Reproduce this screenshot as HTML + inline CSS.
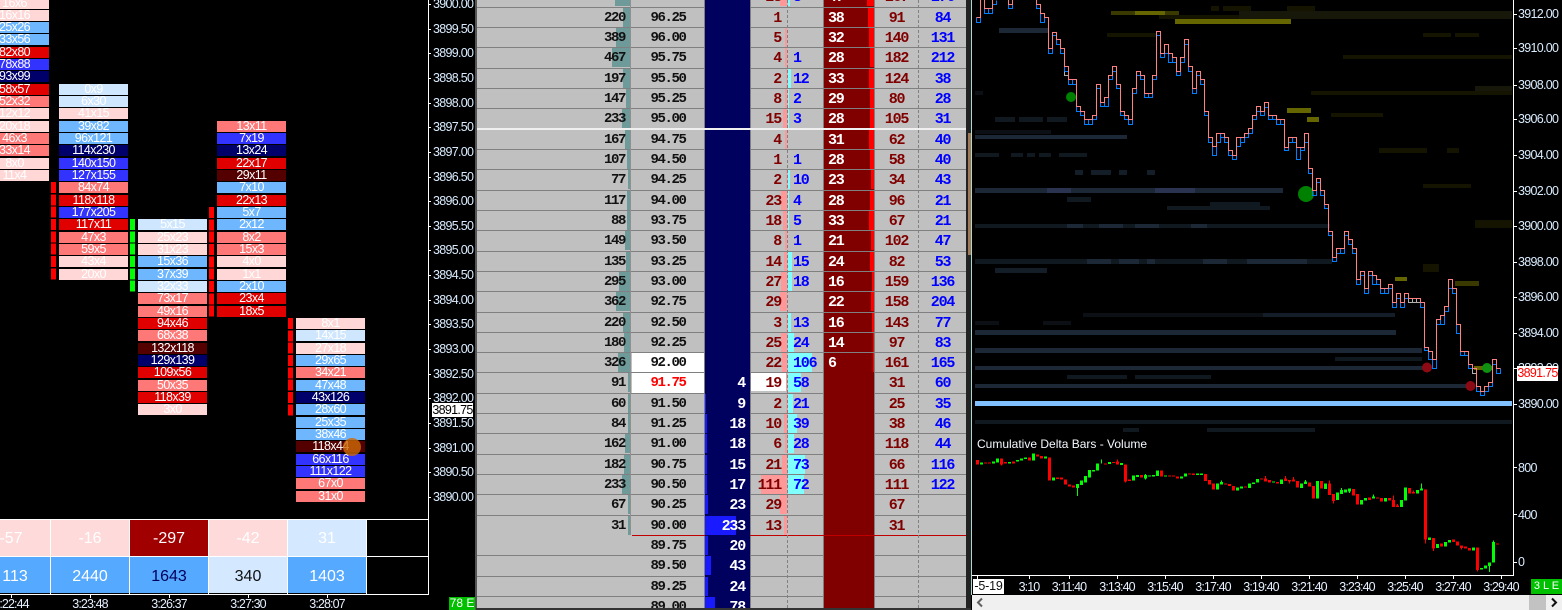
<!DOCTYPE html>
<html><head><meta charset="utf-8"><title>Chart</title>
<style>
html,body{margin:0;padding:0;background:#000;width:1562px;height:610px;overflow:hidden}
#w{position:relative;width:1562px;height:610px;overflow:hidden;background:#000;font-family:"Liberation Sans",sans-serif}
#w div{position:absolute}
.c{width:69px;height:11px;line-height:11px;font-size:12.5px;letter-spacing:-.6px;color:#fff;text-align:center;white-space:nowrap}
.lp{background:#ffd7d7}.lb{background:#cfe6ff}.b{background:#6eb7ff}.s{background:#ff7878}.r0{background:#e00000}.bb{background:#3333ff}.n{background:#00006a}.d0{background:#550000}
.mk{width:5px;background:repeating-linear-gradient(#ff0000 0 11px,#000 11px 12.325px)}
.t{left:0;width:78px;height:36px;line-height:37px;font-size:16px;text-align:center;color:#fff}
.t2{line-height:39px}
.a{left:433px;width:42px;height:14px;line-height:14px;font-size:12.5px;letter-spacing:-.7px;color:#d9ecff;white-space:nowrap}
.ak{left:429px;width:2px;height:1px;background:#fff}
.tm{width:60px;text-align:center;height:14px;line-height:14px;font-size:12.5px;letter-spacing:-.9px;color:#e6f0ff;white-space:nowrap}
.l{left:477px;width:489px;height:1px;background:#808080}
.r{left:477px;width:489px;height:20px;line-height:21px;font-family:"Liberation Mono",monospace;font-weight:bold;font-size:15px;letter-spacing:-1.2px}
.r i,.r u{position:absolute;font-style:normal;text-decoration:none;top:0;white-space:nowrap}
.r u{height:19px}
.tl{right:336px;background:#6f9a9a}
.v{right:341px;font-size:14px;letter-spacing:-1.4px;color:#111}
.p{left:155px;width:72px;text-align:center;font-size:14px;letter-spacing:-1.4px;color:#111}
.nt{right:221px;color:#fff}
.nb{left:228px;background:#1a1aff}
.k{right:179px;background:#ff9999}
.bd{right:185px;color:#800000}
.cy{left:311px;background:#80ffff}
.of{left:316px;color:#0000ff}
.x{left:351px;color:#fff}
.e{right:92px;background:#ff0000}
.y{left:398px;width:43px;text-align:center;color:#800000}
.z{left:442px;width:47px;text-align:center;color:#0000ff}
.ra{left:1518px;width:42px;height:14px;line-height:14px;font-size:12.5px;letter-spacing:-.7px;color:#d9ecff;white-space:nowrap}
.rk{left:1513px;width:4px;height:1px;background:#fff}
.tk{width:1px;height:4px;top:575px;background:#fff}
</style></head><body><div id="w">

<!-- footprint col 1 -->
<div class="c lp" style="left:-20px;top:-2px">16x6</div>
<div class="c lp" style="left:-20px;top:10px">16x16</div>
<div class="c b" style="left:-20px;top:22px">25x26</div>
<div class="c b" style="left:-20px;top:34px">33x56</div>
<div class="c r0" style="left:-20px;top:47px">82x80</div>
<div class="c bb" style="left:-20px;top:59px">78x88</div>
<div class="c n" style="left:-20px;top:71px">93x99</div>
<div class="c r0" style="left:-20px;top:84px">58x57</div>
<div class="c s" style="left:-20px;top:96px">52x32</div>
<div class="c lp" style="left:-20px;top:108px">12x12</div>
<div class="c lp" style="left:-20px;top:121px">20x18</div>
<div class="c s" style="left:-20px;top:133px">46x3</div>
<div class="c s" style="left:-20px;top:145px">33x14</div>
<div class="c lp" style="left:-20px;top:158px">8x0</div>
<div class="c lp" style="left:-20px;top:170px">11x4</div>
<!-- col 2 -->
<div class="c lb" style="left:59px;top:84px">0x9</div>
<div class="c lb" style="left:59px;top:96px">6x30</div>
<div class="c lp" style="left:59px;top:108px">41x15</div>
<div class="c b" style="left:59px;top:121px">39x82</div>
<div class="c b" style="left:59px;top:133px">96x121</div>
<div class="c n" style="left:59px;top:145px">114x230</div>
<div class="c bb" style="left:59px;top:158px">140x150</div>
<div class="c bb" style="left:59px;top:170px">127x155</div>
<div class="c s" style="left:59px;top:182px">84x74</div>
<div class="c r0" style="left:59px;top:195px">118x118</div>
<div class="c bb" style="left:59px;top:207px">177x205</div>
<div class="c r0" style="left:59px;top:219px">117x11</div>
<div class="c s" style="left:59px;top:232px">47x3</div>
<div class="c s" style="left:59px;top:244px">59x5</div>
<div class="c lp" style="left:59px;top:256px">43x4</div>
<div class="c lp" style="left:59px;top:269px">20x0</div>
<!-- col 3 -->
<div class="c lb" style="left:138px;top:219px">5x15</div>
<div class="c lp" style="left:138px;top:232px">25x23</div>
<div class="c lp" style="left:138px;top:244px">31x23</div>
<div class="c b" style="left:138px;top:256px">15x36</div>
<div class="c b" style="left:138px;top:269px">37x39</div>
<div class="c lb" style="left:138px;top:281px">32x33</div>
<div class="c s" style="left:138px;top:293px">73x17</div>
<div class="c s" style="left:138px;top:306px">49x16</div>
<div class="c r0" style="left:138px;top:318px">94x46</div>
<div class="c s" style="left:138px;top:330px">68x38</div>
<div class="c d0" style="left:138px;top:343px">132x118</div>
<div class="c n" style="left:138px;top:355px">129x139</div>
<div class="c r0" style="left:138px;top:367px">109x56</div>
<div class="c s" style="left:138px;top:380px">50x35</div>
<div class="c r0" style="left:138px;top:392px">118x39</div>
<div class="c lp" style="left:138px;top:404px">3x0</div>
<!-- col 4 -->
<div class="c s" style="left:217px;top:121px">13x11</div>
<div class="c bb" style="left:217px;top:133px">7x19</div>
<div class="c n" style="left:217px;top:145px">13x24</div>
<div class="c r0" style="left:217px;top:158px">22x17</div>
<div class="c d0" style="left:217px;top:170px">29x11</div>
<div class="c b" style="left:217px;top:182px">7x10</div>
<div class="c r0" style="left:217px;top:195px">22x13</div>
<div class="c b" style="left:217px;top:207px">5x7</div>
<div class="c b" style="left:217px;top:219px">2x12</div>
<div class="c s" style="left:217px;top:232px">8x2</div>
<div class="c s" style="left:217px;top:244px">15x3</div>
<div class="c lp" style="left:217px;top:256px">4x0</div>
<div class="c lp" style="left:217px;top:269px">1x1</div>
<div class="c b" style="left:217px;top:281px">2x10</div>
<div class="c r0" style="left:217px;top:293px">23x4</div>
<div class="c r0" style="left:217px;top:306px">18x5</div>
<!-- col 5 -->
<div class="c lp" style="left:296px;top:318px">8x1</div>
<div class="c lb" style="left:296px;top:330px">14x15</div>
<div class="c lp" style="left:296px;top:343px">27x18</div>
<div class="c b" style="left:296px;top:355px">29x65</div>
<div class="c s" style="left:296px;top:367px">34x21</div>
<div class="c b" style="left:296px;top:380px">47x48</div>
<div class="c n" style="left:296px;top:392px">43x126</div>
<div class="c b" style="left:296px;top:404px">28x60</div>
<div class="c b" style="left:296px;top:417px">25x35</div>
<div class="c b" style="left:296px;top:429px">38x46</div>
<div class="c d0" style="left:296px;top:441px">118x44</div>
<div class="c bb" style="left:296px;top:454px">66x116</div>
<div class="c bb" style="left:296px;top:466px">111x122</div>
<div class="c s" style="left:296px;top:478px">67x0</div>
<div class="c s" style="left:296px;top:491px">31x0</div>
<div style="left:343px;top:438px;width:18px;height:18px;border-radius:50%;background:rgba(205,105,5,.8)"></div>
<!-- markers -->
<div class="mk" style="left:51px;top:182px;height:98px"></div>
<div class="mk" style="left:130px;top:219px;height:73px;background:repeating-linear-gradient(#00ff00 0 11px,#000 11px 12.325px)"></div>
<div class="mk" style="left:209px;top:207px;height:110px"></div>
<div class="mk" style="left:288px;top:318px;height:98px"></div>

<!-- bottom table -->
<div class="t" style="left:-28px;top:520px;width:78px;background:#ffdada">-57</div>
<div class="t" style="left:51px;top:520px;background:#ffdada">-16</div>
<div class="t" style="left:130px;top:520px;background:#a00000">-297</div>
<div class="t" style="left:209px;top:520px;background:#ffdada">-42</div>
<div class="t" style="left:288px;top:520px;background:#d4e8ff">31</div>
<div class="t t2" style="left:-20px;top:557px;width:70px;background:#55a9ff">113</div>
<div class="t t2" style="left:51px;top:557px;background:#55a9ff">2440</div>
<div class="t t2" style="left:130px;top:557px;background:#55a9ff;color:#00005a">1643</div>
<div class="t t2" style="left:209px;top:557px;background:#d4e8ff;color:#111">340</div>
<div class="t t2" style="left:288px;top:557px;background:#55a9ff">1403</div>
<div style="left:0;top:519px;width:428px;height:1px;background:#fff"></div>
<div style="left:0;top:556px;width:428px;height:1px;background:#fff"></div>
<div style="left:0;top:594px;width:429px;height:1px;background:#fff"></div>
<div style="left:428px;top:0;width:1px;height:595px;background:#fff"></div>
<div style="left:50px;top:519px;width:1px;height:75px;background:#fff"></div>
<div style="left:129px;top:519px;width:1px;height:75px;background:#fff"></div>
<div style="left:208px;top:519px;width:1px;height:75px;background:#fff"></div>
<div style="left:287px;top:519px;width:1px;height:75px;background:#fff"></div>
<div style="left:366px;top:519px;width:1px;height:75px;background:#fff"></div>
<div class="tk" style="left:11px;top:595px;height:3px"></div><div class="tk" style="left:90px;top:595px;height:3px"></div><div class="tk" style="left:169px;top:595px;height:3px"></div><div class="tk" style="left:248px;top:595px;height:3px"></div><div class="tk" style="left:327px;top:595px;height:3px"></div>
<div class="tm" style="left:-19px;top:597px">3:22:44</div>
<div class="tm" style="left:60px;top:597px">3:23:48</div>
<div class="tm" style="left:139px;top:597px">3:26:37</div>
<div class="tm" style="left:218px;top:597px">3:27:30</div>
<div class="tm" style="left:297px;top:597px">3:28:07</div>

<!-- left axis -->
<div class="a" style="top:-3px">3900.00</div><div class="ak" style="top:4px"></div>
<div class="a" style="top:22px">3899.50</div><div class="ak" style="top:29px"></div>
<div class="a" style="top:46px">3899.00</div><div class="ak" style="top:53px"></div>
<div class="a" style="top:71px">3898.50</div><div class="ak" style="top:78px"></div>
<div class="a" style="top:96px">3898.00</div><div class="ak" style="top:103px"></div>
<div class="a" style="top:120px">3897.50</div><div class="ak" style="top:127px"></div>
<div class="a" style="top:145px">3897.00</div><div class="ak" style="top:152px"></div>
<div class="a" style="top:170px">3896.50</div><div class="ak" style="top:177px"></div>
<div class="a" style="top:194px">3896.00</div><div class="ak" style="top:201px"></div>
<div class="a" style="top:219px">3895.50</div><div class="ak" style="top:226px"></div>
<div class="a" style="top:243px">3895.00</div><div class="ak" style="top:250px"></div>
<div class="a" style="top:268px">3894.50</div><div class="ak" style="top:275px"></div>
<div class="a" style="top:293px">3894.00</div><div class="ak" style="top:300px"></div>
<div class="a" style="top:317px">3893.50</div><div class="ak" style="top:324px"></div>
<div class="a" style="top:342px">3893.00</div><div class="ak" style="top:349px"></div>
<div class="a" style="top:367px">3892.50</div><div class="ak" style="top:374px"></div>
<div class="a" style="top:391px">3892.00</div><div class="ak" style="top:398px"></div>
<div class="a" style="top:416px">3891.50</div><div class="ak" style="top:423px"></div>
<div class="a" style="top:441px">3891.00</div><div class="ak" style="top:448px"></div>
<div class="a" style="top:465px">3890.50</div><div class="ak" style="top:472px"></div>
<div class="a" style="top:490px">3890.00</div><div class="ak" style="top:497px"></div>
<div style="left:432px;top:403px;width:41px;height:14px;background:#fff;color:#000;font-size:12.5px;line-height:14px;letter-spacing:-.7px;text-align:center;white-space:nowrap">3891.75</div>
<div style="left:449px;top:597px;width:26px;height:13px;background:#00c000;color:#fff;font-size:12px;line-height:13px;text-align:center;white-space:nowrap">78 E</div>
<div style="left:475px;top:0;width:2px;height:610px;background:#555"></div>

<!-- DOM ladder -->
<div style="left:477px;top:0;width:489px;height:608px;background:#c0c0c0"></div>
<div class="l" style="top:7px"></div><div class="l" style="top:27px"></div><div class="l" style="top:47px"></div><div class="l" style="top:68px"></div><div class="l" style="top:88px"></div><div class="l" style="top:108px"></div><div class="l" style="top:149px"></div><div class="l" style="top:169px"></div><div class="l" style="top:190px"></div><div class="l" style="top:210px"></div><div class="l" style="top:230px"></div><div class="l" style="top:251px"></div><div class="l" style="top:271px"></div><div class="l" style="top:291px"></div><div class="l" style="top:312px"></div><div class="l" style="top:332px"></div><div class="l" style="top:352px"></div><div class="l" style="top:372px"></div><div class="l" style="top:393px"></div><div class="l" style="top:413px"></div><div class="l" style="top:433px"></div><div class="l" style="top:454px"></div><div class="l" style="top:474px"></div><div class="l" style="top:494px"></div><div class="l" style="top:515px"></div><div class="l" style="top:555px"></div><div class="l" style="top:576px"></div><div class="l" style="top:596px"></div>
<div style="left:632px;top:353px;width:72px;height:40px;background:#fff"></div>
<div style="left:632px;top:372px;width:72px;height:1px;background:#808080"></div>
<div style="left:704px;top:0;width:1px;height:608px;background:#808080"></div>
<div style="left:630px;top:0;width:1px;height:535px;background:#909090"></div>
<div style="left:705px;top:0;width:45px;height:608px;background:#00005f"></div>
<div style="left:750px;top:0;width:1px;height:608px;background:#808080"></div>
<div style="left:823px;top:0;width:1px;height:608px;background:#808080"></div>
<div style="left:824px;top:0;width:50px;height:608px;background:#800000"></div>
<div style="left:874px;top:0;width:1px;height:608px;background:#808080"></div>
<div style="left:824px;top:7px;width:50px;height:1px;background:#808080"></div><div style="left:824px;top:27px;width:50px;height:1px;background:#808080"></div><div style="left:824px;top:47px;width:50px;height:1px;background:#808080"></div><div style="left:824px;top:68px;width:50px;height:1px;background:#808080"></div><div style="left:824px;top:88px;width:50px;height:1px;background:#808080"></div><div style="left:824px;top:108px;width:50px;height:1px;background:#808080"></div><div style="left:824px;top:149px;width:50px;height:1px;background:#808080"></div><div style="left:824px;top:169px;width:50px;height:1px;background:#808080"></div><div style="left:824px;top:190px;width:50px;height:1px;background:#808080"></div><div style="left:824px;top:210px;width:50px;height:1px;background:#808080"></div><div style="left:824px;top:230px;width:50px;height:1px;background:#808080"></div><div style="left:824px;top:251px;width:50px;height:1px;background:#808080"></div><div style="left:824px;top:271px;width:50px;height:1px;background:#808080"></div><div style="left:824px;top:291px;width:50px;height:1px;background:#808080"></div><div style="left:824px;top:312px;width:50px;height:1px;background:#808080"></div><div style="left:824px;top:332px;width:50px;height:1px;background:#808080"></div><div style="left:824px;top:352px;width:50px;height:1px;background:#808080"></div>
<div class="r" style="top:-13px"><u class="tl" style="width:15px"></u><i class="v">395</i><i class="p">96.50</i><u class="k" style="width:7px"></u><i class="bd">28</i><u class="cy" style="width:2px"></u><i class="of">8</i><i class="x">47</i><u class="e" style="width:7px"></u><i class="y">167</i><i class="z">176</i></div>
<div class="r" style="top:8px"><u class="tl" style="width:7px"></u><i class="v">220</i><i class="p">96.25</i><i class="bd">1</i><i class="x">38</i><u class="e" style="width:6px"></u><i class="y">91</i><i class="z">84</i></div>
<div class="r" style="top:28px"><u class="tl" style="width:14px"></u><i class="v">389</i><i class="p">96.00</i><u class="k" style="width:2px"></u><i class="bd">5</i><i class="x">32</i><u class="e" style="width:5px"></u><i class="y">140</i><i class="z">131</i></div>
<div class="r" style="top:48px"><u class="tl" style="width:18px"></u><i class="v">467</i><i class="p">95.75</i><u class="k" style="width:2px"></u><i class="bd">4</i><i class="of">1</i><i class="x">28</i><u class="e" style="width:4px"></u><i class="y">182</i><i class="z">212</i></div>
<div class="r" style="top:69px"><u class="tl" style="width:7px"></u><i class="v">197</i><i class="p">95.50</i><u class="k" style="width:1px"></u><i class="bd">2</i><u class="cy" style="width:3px"></u><i class="of">12</i><i class="x">33</i><u class="e" style="width:5px"></u><i class="y">124</i><i class="z">38</i></div>
<div class="r" style="top:89px"><u class="tl" style="width:4px"></u><i class="v">147</i><i class="p">95.25</i><u class="k" style="width:2px"></u><i class="bd">8</i><u class="cy" style="width:1px"></u><i class="of">2</i><i class="x">29</i><u class="e" style="width:4px"></u><i class="y">80</i><i class="z">28</i></div>
<div class="r" style="top:109px"><u class="tl" style="width:8px"></u><i class="v">233</i><i class="p">95.00</i><u class="k" style="width:4px"></u><i class="bd">15</i><u class="cy" style="width:1px"></u><i class="of">3</i><i class="x">28</i><u class="e" style="width:4px"></u><i class="y">105</i><i class="z">31</i></div>
<div class="r" style="top:130px"><u class="tl" style="width:5px"></u><i class="v">167</i><i class="p">94.75</i><u class="k" style="width:2px"></u><i class="bd">4</i><i class="x">31</i><u class="e" style="width:5px"></u><i class="y">62</i><i class="z">40</i></div>
<div class="r" style="top:150px"><u class="tl" style="width:3px"></u><i class="v">107</i><i class="p">94.50</i><i class="bd">1</i><i class="of">1</i><i class="x">28</i><u class="e" style="width:4px"></u><i class="y">58</i><i class="z">40</i></div>
<div class="r" style="top:170px"><u class="tl" style="width:2px"></u><i class="v">77</i><i class="p">94.25</i><u class="k" style="width:1px"></u><i class="bd">2</i><u class="cy" style="width:2px"></u><i class="of">10</i><i class="x">23</i><u class="e" style="width:3px"></u><i class="y">34</i><i class="z">43</i></div>
<div class="r" style="top:191px"><u class="tl" style="width:3px"></u><i class="v">117</i><i class="p">94.00</i><u class="k" style="width:6px"></u><i class="bd">23</i><u class="cy" style="width:1px"></u><i class="of">4</i><i class="x">28</i><u class="e" style="width:4px"></u><i class="y">96</i><i class="z">21</i></div>
<div class="r" style="top:211px"><u class="tl" style="width:3px"></u><i class="v">88</i><i class="p">93.75</i><u class="k" style="width:4px"></u><i class="bd">18</i><u class="cy" style="width:1px"></u><i class="of">5</i><i class="x">33</i><u class="e" style="width:5px"></u><i class="y">67</i><i class="z">21</i></div>
<div class="r" style="top:231px"><u class="tl" style="width:5px"></u><i class="v">149</i><i class="p">93.50</i><u class="k" style="width:2px"></u><i class="bd">8</i><i class="of">1</i><i class="x">21</i><u class="e" style="width:3px"></u><i class="y">102</i><i class="z">47</i></div>
<div class="r" style="top:252px"><u class="tl" style="width:4px"></u><i class="v">135</i><i class="p">93.25</i><u class="k" style="width:3px"></u><i class="bd">14</i><u class="cy" style="width:4px"></u><i class="of">15</i><i class="x">24</i><u class="e" style="width:4px"></u><i class="y">82</i><i class="z">53</i></div>
<div class="r" style="top:272px"><u class="tl" style="width:11px"></u><i class="v">295</i><i class="p">93.00</i><u class="k" style="width:6px"></u><i class="bd">27</i><u class="cy" style="width:4px"></u><i class="of">18</i><i class="x">16</i><u class="e" style="width:2px"></u><i class="y">159</i><i class="z">136</i></div>
<div class="r" style="top:292px"><u class="tl" style="width:14px"></u><i class="v">362</i><i class="p">92.75</i><u class="k" style="width:7px"></u><i class="bd">29</i><i class="x">22</i><u class="e" style="width:3px"></u><i class="y">158</i><i class="z">204</i></div>
<div class="r" style="top:313px"><u class="tl" style="width:7px"></u><i class="v">220</i><i class="p">92.50</i><u class="k" style="width:1px"></u><i class="bd">3</i><u class="cy" style="width:3px"></u><i class="of">13</i><i class="x">16</i><u class="e" style="width:2px"></u><i class="y">143</i><i class="z">77</i></div>
<div class="r" style="top:333px"><u class="tl" style="width:6px"></u><i class="v">180</i><i class="p">92.25</i><u class="k" style="width:6px"></u><i class="bd">25</i><u class="cy" style="width:6px"></u><i class="of">24</i><i class="x">14</i><u class="e" style="width:1px"></u><i class="y">97</i><i class="z">83</i></div>
<div class="r" style="top:353px"><u class="tl" style="width:12px"></u><i class="v">326</i><i class="p">92.00</i><u class="k" style="width:5px"></u><i class="bd">22</i><u class="cy" style="width:24px"></u><i class="of">106</i><i class="x">6</i><u class="e" style="width:1px"></u><i class="y">161</i><i class="z">165</i></div>
<div class="r" style="top:373px"><u class="tl" style="width:2px"></u><i class="v">91</i><i class="p" style="color:#f00">91.75</i><i class="nt">4</i><u style="left:274px;width:36px;height:18px;background:#fff"></u><u class="k" style="width:1px"></u><i class="bd">19</i><u class="cy" style="width:13px"></u><i class="of">58</i><i class="y">31</i><i class="z">60</i></div>
<div class="r" style="top:394px"><u class="tl" style="width:2px"></u><i class="v">60</i><i class="p">91.50</i><u class="nb" style="width:1px"></u><i class="nt">9</i><u class="k" style="width:1px"></u><i class="bd">2</i><u class="cy" style="width:5px"></u><i class="of">21</i><i class="y">25</i><i class="z">35</i></div>
<div class="r" style="top:414px"><u class="tl" style="width:2px"></u><i class="v">84</i><i class="p">91.25</i><u class="nb" style="width:2px"></u><i class="nt">18</i><u class="k" style="width:3px"></u><i class="bd">10</i><u class="cy" style="width:9px"></u><i class="of">39</i><i class="y">38</i><i class="z">46</i></div>
<div class="r" style="top:434px"><u class="tl" style="width:5px"></u><i class="v">162</i><i class="p">91.00</i><u class="nb" style="width:2px"></u><i class="nt">18</i><u class="k" style="width:2px"></u><i class="bd">6</i><u class="cy" style="width:6px"></u><i class="of">28</i><i class="y">118</i><i class="z">44</i></div>
<div class="r" style="top:455px"><u class="tl" style="width:6px"></u><i class="v">182</i><i class="p">90.75</i><u class="nb" style="width:2px"></u><i class="nt">15</i><u class="k" style="width:5px"></u><i class="bd">21</i><u class="cy" style="width:17px"></u><i class="of">73</i><i class="y">66</i><i class="z">116</i></div>
<div class="r" style="top:475px"><u class="tl" style="width:8px"></u><i class="v">233</i><i class="p">90.50</i><u class="nb" style="width:2px"></u><i class="nt">17</i><u class="k" style="width:26px"></u><i class="bd">111</i><u class="cy" style="width:16px"></u><i class="of">72</i><i class="y">111</i><i class="z">122</i></div>
<div class="r" style="top:495px"><u class="tl" style="width:2px"></u><i class="v">67</i><i class="p">90.25</i><u class="nb" style="width:3px"></u><i class="nt">23</i><u class="k" style="width:7px"></u><i class="bd">29</i><i class="y">67</i></div>
<div class="r" style="top:516px"><u class="tl" style="width:2px"></u><i class="v">31</i><i class="p">90.00</i><u class="nb" style="width:31px"></u><i class="nt">233</i><u class="k" style="width:3px"></u><i class="bd">13</i><i class="y">31</i></div>
<div class="r" style="top:536px"><i class="p">89.75</i><u class="nb" style="width:3px"></u><i class="nt">20</i></div>
<div class="r" style="top:556px"><i class="p">89.50</i><u class="nb" style="width:6px"></u><i class="nt">43</i></div>
<div class="r" style="top:577px"><i class="p">89.25</i><u class="nb" style="width:3px"></u><i class="nt">24</i></div>
<div class="r" style="top:597px;height:11px;overflow:hidden"><i class="p">89.00</i><u class="nb" style="width:10px"></u><i class="nt">78</i></div>
<div style="left:477px;top:128px;width:489px;height:2px;background:#f0f0f0"></div>
<div style="left:632px;top:535px;width:73px;height:1px;background:#c00000"></div><div style="left:750px;top:535px;width:216px;height:1px;background:#c00000"></div>
<div style="left:787px;top:0;width:0;height:608px;border-left:1px dashed #808080"></div>
<div style="left:918px;top:0;width:0;height:608px;border-left:1px dashed #808080"></div>
<div style="left:966px;top:0;width:5px;height:610px;background:#222"></div>
<div style="left:968px;top:133px;width:3px;height:122px;background:#a07858"></div>
<div style="left:476px;top:608px;width:495px;height:2px;background:#333"></div>
<div style="left:971px;top:0;width:1px;height:595px;background:#a8dcd0"></div>

<!-- right chart -->
<svg style="position:absolute;left:0;top:0" width="1562" height="610" viewBox="0 0 1562 610">
<g shape-rendering="crispEdges">
<path fill="#0c1014" d="M975 91h8v4h-8zM975 130h76v4h-76zM1083 313h180v4h-180zM975 321h24v4h-24zM1043 321h28v4h-28z"/>
<path fill="#101820" d="M995 117h20v5h-20zM1019 117h24v5h-24zM1047 117h20v5h-20zM975 153h24v4h-24zM1011 153h12v4h-12zM1027 153h8v4h-8zM1039 153h12v4h-12zM1059 153h28v4h-28zM1067 197h24v5h-24zM1167 206h103v4h-103zM1210 202h50v4h-50zM975 224h355v4h-355zM975 259h357v5h-357zM1067 375h60v4h-60zM1135 375h76v4h-76zM1335 357h87v4h-87zM1123 428h16v4h-16zM1207 428h108v4h-108zM975 420h537v4h-537z"/>
<path fill="#141e28" d="M1075 170h8v5h-8zM1091 170h20v5h-20zM1119 170h8v5h-8zM1147 170h8v5h-8zM995 268h52v5h-52zM1263 313h132v4h-132z"/>
<path fill="#1c2836" d="M999 28h49v5h-49zM975 135h152v4h-152zM975 188h308v5h-308zM1067 224h16v4h-16zM1099 224h24v4h-24zM1135 224h24v4h-24zM1191 224h16v4h-16zM1087 259h24v5h-24zM1119 259h20v5h-20zM1147 259h8v5h-8zM1203 259h24v5h-24zM1247 259h60v5h-60zM975 330h421v5h-421zM975 348h447v5h-447zM975 366h450v4h-450zM975 384h494v4h-494z"/>
<path fill="#2a3450" d="M1047 188h24v5h-24zM1155 188h40v5h-40z"/>
<path fill="#80c0ff" d="M975 401h537v5h-537z"/>
<path fill="#141400" d="M1107 33h50v4h-50zM1423 33h28v4h-28zM1455 33h24v4h-24zM1343 55h169v4h-169zM1311 91h201v4h-201zM1331 113h52v4h-52zM1379 148h48v5h-48zM1447 148h12v5h-12zM1423 184h48v4h-48zM1211 6h8v5h-8zM1223 6h28v5h-28zM1287 6h28v5h-28zM1159 15h103v4h-103zM1423 264h16v8h-16zM1475 220h37v8h-37z"/>
<path fill="#18180a" d="M1239 11h273v8h-273zM1475 86h37v5h-37z"/>
<path fill="#3a3a00" d="M1111 11h68v4h-68zM1455 281h24v5h-24z"/>
<path fill="#666600" d="M1175 19h116v5h-116zM1135 11h30v4h-30zM1287 108h24v5h-24zM1307 117h12v5h-12zM1395 277h12v4h-12zM1474 366h18v4h-18z"/>
</g>
<circle cx="1071" cy="97" r="5" fill="#008000"/>
<circle cx="1306" cy="194" r="8" fill="#008000"/>
<circle cx="1427" cy="367.500" r="5" fill="#8b0a14"/>
<circle cx="1470.500" cy="386" r="5" fill="#8b0a14"/>
<circle cx="1487" cy="368" r="5" fill="#109010"/>
<g transform="translate(.5 .5)" fill="none" shape-rendering="crispEdges">
<path stroke="#0080ff" d="M976 17v5h4v-5M984 8v5h4v-5M988 8v5h4v-5M992 0v4h4v-4M1008 4v4h4v-4M1036 4v4h4v-4M1040 13v9h4v-9M1048 48v5h4v-5M1052 32v3h4v-3M1056 39v5h4v-5M1060 48v5h4v-5M1064 66v5h4v-5M1068 79v5h4v-5M1072 79v5h4v-5M1076 106v5h4v-5M1080 111v4h4v-4M1084 119v5h4v-5M1088 119v5h4v-5M1092 115v4h4v-4M1096 84v4h4v-4M1100 102v4h4v-4M1104 97v9h4v-9M1108 75v4h4v-4M1112 66v5h4v-5M1116 84v4h4v-4M1120 111v4h4v-4M1124 115v4h4v-4M1128 119v5h4v-5M1132 88v5h4v-5M1136 71v4h4v-4M1140 75v4h4v-4M1144 93v4h4v-4M1148 93v4h4v-4M1152 75v4h4v-4M1156 31v4h4v-4M1160 53v4h4v-4M1164 44v9h4v-9M1168 53v9h4v-9M1172 57v5h4v-5M1176 71v4h4v-4M1180 57v5h4v-5M1184 39v5h4v-5M1188 66v5h4v-5M1192 88v5h4v-5M1196 71v4h4v-4M1200 79v5h4v-5M1204 111v4h4v-4M1208 137v5h4v-5M1212 146v9h4v-9M1216 133v9h4v-9M1220 133v4h4v-4M1224 137v5h4v-5M1228 150v5h4v-5M1232 155v4h4v-4M1236 137v9h4v-9M1240 137v5h4v-5M1244 133v4h4v-4M1248 128v5h4v-5M1252 115v4h4v-4M1256 106v5h4v-5M1260 111v4h4v-4M1264 102v5h4v-5M1268 115v4h4v-4M1272 115v4h4v-4M1276 119v5h4v-5M1280 119v5h4v-5M1284 147v3h4v-3M1288 137v5h4v-5M1292 137v5h4v-5M1296 147v12h4v-12M1300 147v3h4v-3M1304 133v9h4v-9M1308 168v5h4v-5M1312 190v5h4v-5M1316 178v4h4v-4M1320 190v5h4v-5M1324 204v4h4v-4M1328 231v4h4v-4M1332 257v4h4v-4M1336 248v5h4v-5M1340 248v5h4v-5M1344 231v4h4v-4M1348 239v5h4v-5M1352 248v5h4v-5M1356 279v5h4v-5M1360 271v4h4v-4M1364 288v5h4v-5M1368 271v4h4v-4M1372 275v9h4v-9M1376 279v5h4v-5M1380 288v5h4v-5M1384 288v5h4v-5M1388 284v4h4v-4M1392 302v5h4v-5M1396 293v5h4v-5M1400 302v5h4v-5M1404 293v5h4v-5M1420 302v5h4v-5M1424 347v3h4v-3M1428 351v8h4v-8M1432 359v9h4v-9M1436 319v5h4v-5M1440 315v9h4v-9M1444 306v5h4v-5M1448 279v9h4v-9M1452 288v5h4v-5M1456 324v9h4v-9M1460 351v4h4v-4M1464 351v4h4v-4M1468 364v4h4v-4M1476 386v5h4v-5M1480 391v4h4v-4M1484 386v5h4v-5M1488 382v4h4v-4M1492 359v5h4v-5M1496 368v5h4v-5"/>
<path stroke="#b0b0b0" d="M1064 71v4h4v-4M1408 298v4h4v-4M1412 298v4h4v-4M1416 298v4h4v-4M1472 368v5h4v-5"/>
<path stroke="#ff8080" d="M976 17H980V-5H984V8H992V-5H1008V4H1012V-5H1036V4H1040V13H1044V17H1048V48H1052V32H1056V39H1060V48H1064V66H1068V79H1076V106H1080V111H1084V119H1092V115H1096V84H1100V102H1104V97H1108V75H1112V66H1116V84H1120V111H1124V115H1128V119H1132V88H1136V71H1140V75H1144V93H1152V75H1156V31H1160V53H1164V44H1168V53H1172V57H1176V71H1180V57H1184V39H1188V66H1192V88H1196V71H1200V79H1204V111H1208V137H1212V146H1216V133H1224V137H1228V150H1232V155H1236V137H1244V133H1248V128H1252V115H1256V106H1260V111H1264V102H1268V115H1276V119H1284V147H1288V137H1296V147H1304V133H1308V168H1312V190H1316V178H1320V190H1324V204H1328V231H1332V257H1336V248H1344V231H1348V239H1352V248H1356V279H1360V271H1364V288H1368V271H1372V275H1376V279H1380V288H1388V284H1392V302H1396V293H1400V302H1404V293H1408V298H1420V302H1424V347H1428V351H1432V359H1436V319H1440V315H1444V306H1448V279H1452V288H1456V324H1460V351H1468V364H1472V368H1476V386H1480V391H1484V386H1488V382H1492V359H1496V368H1500"/>
</g>
<g transform="translate(970 420) scale(.33333)" fill="none" shape-rendering="crispEdges">
<path stroke="#ff0000" stroke-width="9" d="M22 120v13M46 128v3M58 128v3M94 115v18M106 126v5M130 124v7M178 112v10M202 103v7M214 108v8M238 112v70M262 172v5M274 172v6M286 178v16M298 194v6M310 196v7M406 130v4M430 126v3M442 125v8M466 133v51M478 178v5M514 165v7M574 151v19M598 167v3M610 167v3M622 170v5M658 160v4M670 161v4M706 162v21M718 180v14M730 190v18M766 190v4M778 192v6M790 198v14M826 200v3M874 175v3M886 177v8"/>
<path stroke="#00ff00" stroke-width="9" d="M34 127v6M70 124v7M82 115v12M118 126v5M142 120v5M154 115v7M166 112v5M190 100v22M226 110v6M250 172v10M322 192v12M334 182v13M346 168v19M358 150v22M370 150v4M382 130v22M418 126v6M454 129v6M490 167v15M502 165v6M526 165v10M538 167v3M550 165v5M562 151v17M586 166v4M634 170v6M646 160v10M682 161v4M694 160v5M742 191v18M754 186v8M802 203v9M814 200v5M838 190v14M850 187v5M862 177v10"/>
<path stroke="#00ff00" stroke-width="3" d="M322 204v24M394 118v13M526 162v16M754 182v8"/>
<path stroke="#ff0000" stroke-width="3" d="M442 118v8M466 184v3M94 133v3"/>
</g>
<g transform="translate(1262 420) scale(.33333)" fill="none" shape-rendering="crispEdges">
<path stroke="#ff0000" stroke-width="9" d="M10 175v10M22 180v8M46 186v4M70 176v7M82 180v4M94 178v7M106 183v20M142 188v12M154 198v38M178 183v23M202 190v35M214 222v21M274 207v19M286 222v32M322 232v8M346 232v4M358 234v11M382 234v8M394 240v21M406 257v4M442 204v16M454 216v4M490 208v150M514 354v31M538 370v10M574 358v8M586 364v13M598 376v8M610 380v5M622 384v8M646 382v68M706 370v3"/>
<path stroke="#00ff00" stroke-width="9" d="M34 184v4M58 178v14M118 190v14M130 185v7M166 183v53M190 190v17M226 218v22M238 210v12M250 208v9M262 206v9M298 240v14M310 234v8M334 230v6M370 234v11M418 240v21M430 202v40M466 210v10M478 205v7M502 352v8M526 372v12M550 366v14M562 360v8M634 382v10M658 444v5M670 436v10M682 428v10M694 366v62"/>
<path stroke="#ff0000" stroke-width="3" d="M10 168v7M70 168v8M94 171v7M82 184v6M202 182v8M214 243v8M394 226v14M406 252v5M454 212v4M490 358v12M514 385v8M598 384v5M646 450v4"/>
<path stroke="#00ff00" stroke-width="3" d="M130 180v5M238 204v6M334 224v6M262 215v4M478 190v15M682 438v18M694 362v4"/>
</g>
</svg>

<!-- axis lines -->
<div style="left:1513px;top:0;width:1px;height:576px;background:#fff"></div>
<div style="left:972px;top:575px;width:542px;height:1px;background:#fff"></div>
<div class="ra" style="top:7px">3912.00</div><div class="rk" style="top:14px"></div>
<div class="ra" style="top:41px">3910.00</div><div class="rk" style="top:48px"></div>
<div class="ra" style="top:78px">3908.00</div><div class="rk" style="top:85px"></div>
<div class="ra" style="top:112px">3906.00</div><div class="rk" style="top:119px"></div>
<div class="ra" style="top:148px">3904.00</div><div class="rk" style="top:155px"></div>
<div class="ra" style="top:184px">3902.00</div><div class="rk" style="top:191px"></div>
<div class="ra" style="top:219px">3900.00</div><div class="rk" style="top:226px"></div>
<div class="ra" style="top:255px">3898.00</div><div class="rk" style="top:262px"></div>
<div class="ra" style="top:290px">3896.00</div><div class="rk" style="top:297px"></div>
<div class="ra" style="top:326px">3894.00</div><div class="rk" style="top:333px"></div>
<div class="ra" style="top:361px">3892.00</div><div class="rk" style="top:368px"></div>
<div class="ra" style="top:397px">3890.00</div><div class="rk" style="top:404px"></div>
<div style="left:1517px;top:366px;width:41px;height:15px;background:#fff;color:#f00;font-size:12.5px;line-height:15px;letter-spacing:-.7px;text-align:center;white-space:nowrap">3891.75</div>
<div class="ra" style="top:461px">800</div><div class="rk" style="top:467px"></div>
<div class="ra" style="top:508px">400</div><div class="rk" style="top:514px"></div>
<div class="ra" style="top:555px">0</div><div class="rk" style="top:562px"></div>
<div style="left:977px;top:437px;color:#f4f8ff;font-size:12px;line-height:14px;white-space:nowrap">Cumulative Delta Bars - Volume</div>
<div class="tk" style="left:977px"></div><div class="tk" style="left:1029px"></div><div class="tk" style="left:1069px"></div><div class="tk" style="left:1117px"></div><div class="tk" style="left:1165px"></div><div class="tk" style="left:1213px"></div><div class="tk" style="left:1261px"></div><div class="tk" style="left:1309px"></div><div class="tk" style="left:1357px"></div><div class="tk" style="left:1405px"></div><div class="tk" style="left:1453px"></div><div class="tk" style="left:1501px"></div>
<div style="left:973px;top:579px;width:31px;height:15px;background:#fff;color:#111;font-size:12.5px;line-height:15px;text-align:center;letter-spacing:-.2px;overflow:hidden;white-space:nowrap">-5-19</div>
<div class="tm" style="left:999px;top:580px">3:10</div>
<div class="tm" style="left:1039px;top:580px">3:11:40</div>
<div class="tm" style="left:1087px;top:580px">3:13:40</div>
<div class="tm" style="left:1135px;top:580px">3:15:40</div>
<div class="tm" style="left:1183px;top:580px">3:17:40</div>
<div class="tm" style="left:1231px;top:580px">3:19:40</div>
<div class="tm" style="left:1279px;top:580px">3:21:40</div>
<div class="tm" style="left:1327px;top:580px">3:23:40</div>
<div class="tm" style="left:1375px;top:580px">3:25:40</div>
<div class="tm" style="left:1423px;top:580px">3:27:40</div>
<div class="tm" style="left:1471px;top:580px">3:29:40</div>
<div style="left:1531px;top:579px;width:31px;height:15px;background:#00c000;color:#fff;font-size:11px;line-height:15px;text-align:center;white-space:nowrap">3 L E</div>
<!-- scrollbar -->
<div style="left:972px;top:595px;width:590px;height:15px;background:#f0f0f0"></div>
<div style="left:1529px;top:595px;width:17px;height:15px;background:#c2c2c2"></div>
<svg style="position:absolute;left:976px;top:597px" width="8" height="11"><path d="M6 1.500L2 5.500L6 9.500" fill="none" stroke="#606060" stroke-width="2"/></svg>
<svg style="position:absolute;left:1550px;top:597px" width="8" height="11"><path d="M2 1.500L6 5.500L2 9.500" fill="none" stroke="#111" stroke-width="2"/></svg>
</div></body></html>
